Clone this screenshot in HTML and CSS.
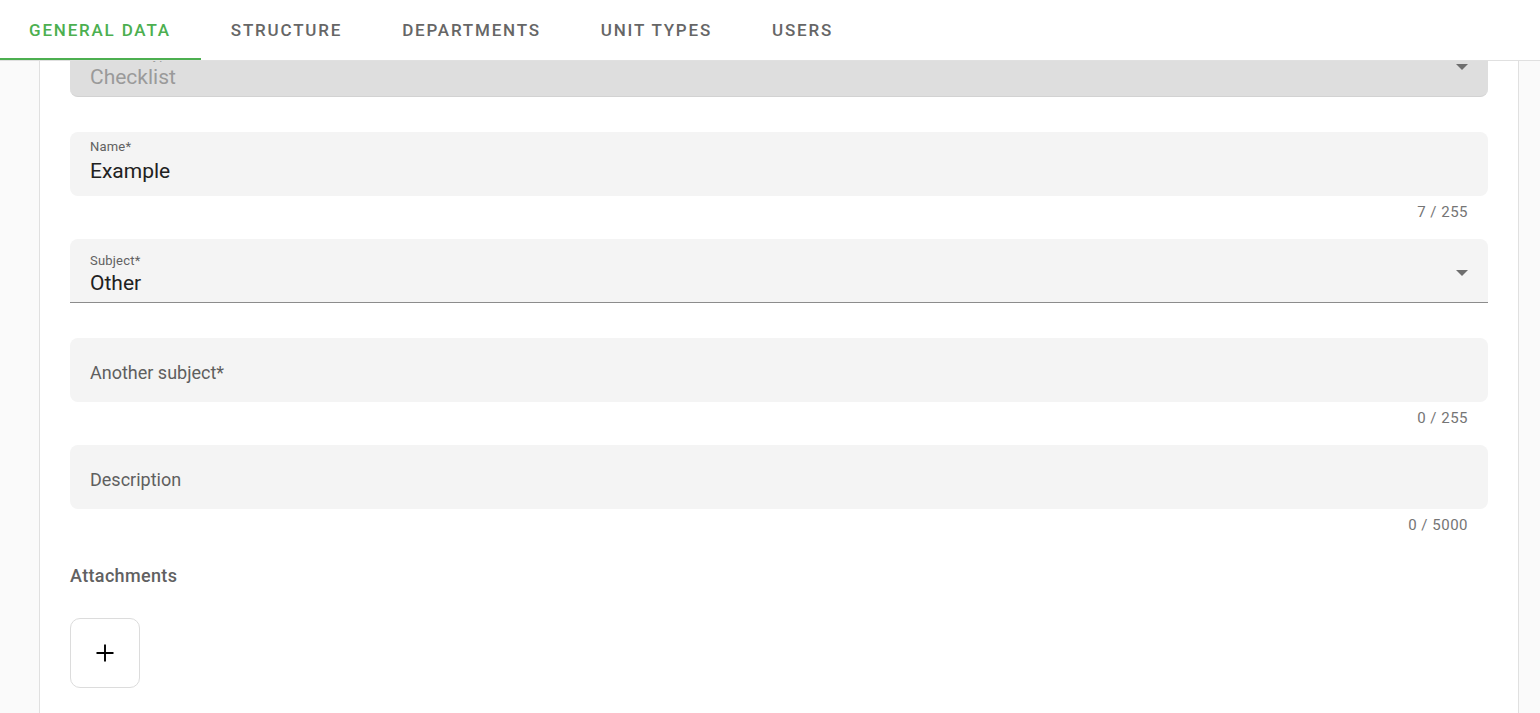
FILE: index.html
```
<html>

<head>
    <link rel="stylesheet" href="styles.css">
</head>

<body>
    <div class="tabs">
        <div class="tab active">General data</div>
        <div class="tab">Structure</div>
        <div class="tab">Departments</div>
        <div class="tab">Unit types</div>
        <div class="tab">Users</div>
    </div>
    <div class="layout">
        <div class="side left"></div>
        <div class="content">
            <div class="form">
                <div class="field select disabled first">
                    <div class="fieldBody">
                        <div class="label">Checklist type*</div>
                        <div class="value">Checklist</div>
                    </div>
                    <span class="arrow"></span>
                </div>
                <div class="details"></div>

                <div class="field">
                    <div class="fieldBody">
                        <div class="label">Name*</div>
                        <div class="value">Example</div>
                    </div>
                </div>
                <div class="details counter">7 / 255</div>

                <div class="field select underlined">
                    <div class="fieldBody">
                        <div class="label">Subject*</div>
                        <div class="value">Other</div>
                    </div>
                    <span class="arrow"></span>
                </div>
                <div class="details"></div>

                <div class="field empty">
                    <div class="placeholder">Another subject*</div>
                </div>
                <div class="details counter">0 / 255</div>

                <div class="field empty">
                    <div class="placeholder">Description</div>
                </div>
                <div class="details counter">0 / 5000</div>

                <div class="attachments">
                    <div class="sectionTitle">Attachments</div>
                    <div class="addBtn">
                        <svg width="20" height="20" viewBox="0 0 20 20">
                            <path d="M10 1.5v17M1.5 10h17" stroke="#000" stroke-width="1.9" fill="none" />
                        </svg>
                    </div>
                </div>
            </div>
        </div>
        <div class="side right"></div>
    </div>
</body>

</html>
```

FILE: styles.css
```
html,
body {
    margin: 0;
    padding: 0;
    height: 100%;
    overflow: hidden;
}

body {
    font-family: Roboto, "Liberation Sans", sans-serif;
    background: #fff;
    display: flex;
    flex-direction: column;
}

.tabs {
    height: 60px;
    flex: none;
    display: flex;
    background: #fff;
    box-shadow: 0 1px 0 #e0e0e0;
    position: relative;
    z-index: 2;
}

.tab {
    padding: 0 30px;
    height: 60px;
    box-sizing: border-box;
    display: flex;
    align-items: center;
    text-transform: uppercase;
    font-size: 17px;
    font-weight: 500;
    letter-spacing: 1.8px;
    color: #666;
}

.tab.active {
    padding-left: 29px;
    color: #4caf50;
    border-bottom: 2px solid #4caf50;
    padding-top: 2px;
}

.layout {
    flex: 1;
    min-height: 0;
    display: flex;
}

.side {
    background: #fafafa;
    flex: none;
}

.side.left {
    width: 39px;
    border-right: 1px solid #e0e0e0;
}

.side.right {
    width: 21px;
    border-left: 1px solid #e0e0e0;
}

.content {
    flex: 1;
    overflow: hidden;
}

.form {
    padding: 0 30px;
}

.field {
    height: 64px;
    box-sizing: border-box;
    background: #f4f4f4;
    border-radius: 8px;
    padding: 7px 20px 0;
    display: flex;
    align-items: flex-start;
}

.field.first {
    margin-top: -27px;
}

.field.select {
    padding-top: 14px;
}

.field.select .value {
    margin-top: 2px;
}

.field.disabled {
    background: #dedede;
    border-bottom: 1px solid #d2d2d2;
}

.field.disabled .value,
.field.disabled .label {
    color: #9a9a9a;
}

.field.underlined {
    border-radius: 8px 8px 0 0;
    border-bottom: 1px solid #8c8c8c;
}

.fieldBody {
    flex: 1;
}

.label {
    font-size: 13px;
    line-height: 16px;
    letter-spacing: 0.2px;
    color: #616161;
}

.value {
    margin-top: 4px;
    font-size: 21px;
    line-height: 24px;
    color: #212121;
}

.arrow {
    align-self: center;
    margin-top: -10px;
    width: 0;
    height: 0;
    border-left: 6px solid transparent;
    border-right: 6px solid transparent;
    border-top: 6px solid #6e6e6e;
}

.field.empty {
    padding: 4px 20px 0;
    align-items: center;
}

.placeholder {
    font-size: 18px;
    color: #5f5f5f;
}

.details {
    height: 35px;
    box-sizing: border-box;
}

.details.counter {
    height: 43px;
    padding: 7px 20px 0;
    text-align: right;
    font-size: 15px;
    line-height: 18px;
    letter-spacing: 0.5px;
    color: #757575;
}

.attachments {
    padding-top: 12px;
}

.sectionTitle {
    font-size: 18px;
    font-weight: 500;
    line-height: 24px;
    letter-spacing: 0.35px;
    color: #616161;
}

.addBtn {
    margin-top: 30px;
    width: 70px;
    height: 70px;
    box-sizing: border-box;
    border: 1px solid #dcdcdc;
    border-radius: 10px;
    display: flex;
    align-items: center;
    justify-content: center;
}
```
